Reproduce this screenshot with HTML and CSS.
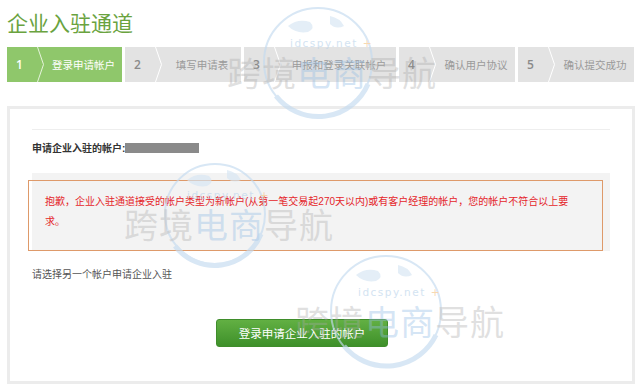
FILE: index.html
```html
<!DOCTYPE html>
<html lang="zh-CN">
<head>
    <meta charset="UTF-8">
    <meta name="viewport" content="width=device-width, initial-scale=1.0">
    <title>企业入驻通道</title>
    <link rel="stylesheet" href="styles.css">
</head>
<body>
    <div class="page">
        <h1 class="title">企业入驻通道</h1>

        <!-- 步驟條 -->
        <div class="steps">
            <div class="step active">
                <span class="step-num">1</span>
                <svg class="step-arrow" width="8" height="35" viewBox="0 0 8 35"><polyline points="0.5,0 6.5,17.5 0.5,35" fill="none" stroke="#e6f3dc" stroke-width="1"/></svg>
                <span class="step-label">登录申请帐户</span>
            </div>
            <div class="step">
                <span class="step-num">2</span>
                <svg class="step-arrow" width="8" height="35" viewBox="0 0 8 35"><polyline points="0.5,0 6.5,17.5 0.5,35" fill="none" stroke="#fff" stroke-width="1"/></svg>
                <span class="step-label">填写申请表</span>
            </div>
            <div class="step wide">
                <span class="step-num">3</span>
                <svg class="step-arrow" width="8" height="35" viewBox="0 0 8 35"><polyline points="0.5,0 6.5,17.5 0.5,35" fill="none" stroke="#fff" stroke-width="1"/></svg>
                <span class="step-label">申报和登录关联帐户</span>
            </div>
            <div class="step">
                <span class="step-num">4</span>
                <svg class="step-arrow" width="8" height="35" viewBox="0 0 8 35"><polyline points="0.5,0 6.5,17.5 0.5,35" fill="none" stroke="#fff" stroke-width="1"/></svg>
                <span class="step-label">确认用户协议</span>
            </div>
            <div class="step">
                <span class="step-num">5</span>
                <svg class="step-arrow" width="8" height="35" viewBox="0 0 8 35"><polyline points="0.5,0 6.5,17.5 0.5,35" fill="none" stroke="#fff" stroke-width="1"/></svg>
                <span class="step-label">确认提交成功</span>
            </div>
        </div>

        <!-- 內容卡片 -->
        <div class="card">
            <div class="card-line"></div>
            <p class="account">申请企业入驻的帐户:<span class="masked"></span></p>
            <div class="alert-wrap">
                <div class="alert">抱歉，企业入驻通道接受的帐户类型为新帐户(从第一笔交易起270天以内)或有客户经理的帐户，您的帐户不符合以上要求。</div>
            </div>
            <p class="hint">请选择另一个帐户申请企业入驻</p>
            <button class="btn">登录申请企业入驻的帐户</button>
        </div>
    </div>

    <!-- 水印 -->
    <div class="wm wm-1">
        <svg class="wm-globe" width="220" height="120" viewBox="0 0 220 120">
            <circle cx="100" cy="60" r="54" fill="none" stroke="#c4dbf0" stroke-width="2"/>
            <path d="M58 94 A54 54 0 0 0 150 82" fill="none" stroke="#c4dbf0" stroke-width="5"/>
            <path d="M70 24 q10 -8 22 -4 q6 6 -2 10 q-12 2 -20 -6z M112 14 q10 2 14 10 q-8 4 -14 -2z" fill="#d6e6f4"/>
        </svg>
        <span class="wm-site">idcspy.net <b>+</b></span>
        <span class="wm-text">跨境<em>电商</em>导航</span>
    </div>
    <div class="wm wm-2">
        <svg class="wm-globe" width="220" height="120" viewBox="0 0 220 120">
            <circle cx="100" cy="60" r="50" fill="none" stroke="#c4dbf0" stroke-width="2"/>
            <path d="M60 92 A50 50 0 0 0 146 80" fill="none" stroke="#c4dbf0" stroke-width="5"/>
            <path d="M72 26 q10 -8 22 -4 q6 6 -2 10 q-12 2 -20 -6z M112 16 q10 2 14 10 q-8 4 -14 -2z" fill="#d6e6f4"/>
        </svg>
        <span class="wm-site">idcspy.net <b>+</b></span>
        <span class="wm-text">跨境<em>电商</em>导航</span>
    </div>
    <div class="wm wm-3">
        <svg class="wm-globe" width="220" height="120" viewBox="0 0 220 120">
            <circle cx="100" cy="60" r="55" fill="none" stroke="#c4dbf0" stroke-width="2"/>
            <path d="M58 95 A55 55 0 0 0 150 84" fill="none" stroke="#c4dbf0" stroke-width="5"/>
            <path d="M70 24 q10 -8 22 -4 q6 6 -2 10 q-12 2 -20 -6z M112 14 q10 2 14 10 q-8 4 -14 -2z" fill="#d6e6f4"/>
        </svg>
        <span class="wm-site">idcspy.net <b>+</b></span>
        <span class="wm-text">跨境<em>电商</em>导航</span>
    </div>
</body>
</html>
```

FILE: styles.css
```css
body {
    margin: 0;
    position: relative;
    font-family: "Liberation Sans", "Noto Sans CJK SC", sans-serif;
    color: #333;
    background: #fff;
}

.page {
    padding: 9px 7px 0 7px;
}

.title {
    margin: 0;
    font-size: 21px;
    line-height: 30px;
    font-weight: normal;
    color: #6aa33f;
}

/* 步驟條 */
.steps {
    display: flex;
    gap: 3px;
    margin-top: 8px;
    height: 35px;
}

.step {
    display: flex;
    align-items: center;
    width: 116px;
    background-color: #e3e3e3;
    color: #9a9a9a;
}

.step.wide {
    width: 152px;
}

.step.active {
    width: 115px;
    background-color: #8fc76b;
    color: #fff;
}

.step-num {
    width: 21px;
    padding-left: 9px;
    font-family: "Open Sans", sans-serif;
    font-size: 12px;
    font-weight: 600;
    color: #8a8a8a;
}

.step.active .step-num {
    color: #fff;
}

.step-arrow {
    flex: none;
}

.step-label {
    flex: 1;
    text-align: center;
    font-size: 10.5px;
}

/* 內容卡片 */
.card {
    margin-top: 24px;
    border: 3px solid #ececec;
    padding: 20px 22px 34px 22px;
}

.card-line {
    height: 1px;
    background-color: #eeeeee;
}

.account {
    margin: 9px 0 0 0;
    font-size: 10px;
    line-height: 20px;
    font-weight: bold;
    color: #333;
}

.masked {
    display: inline-block;
    width: 74px;
    height: 10px;
    vertical-align: -1px;
    background-color: #8a8a8a;
}

.alert-wrap {
    margin-top: 14px;
    padding-top: 7px;
    background-color: #f3f3f3;
}

.alert {
    margin: 0 7px 0 -4px;
    padding: 11px 18px 18px 16px;
    border: 1px solid #de9a6a;
    font-size: 10px;
    line-height: 20px;
    color: #e5252a;
}

.hint {
    margin: 14px 0 0 0;
    font-size: 10px;
    line-height: 20px;
    color: #555;
}

.btn {
    display: block;
    margin: 34px 0 0 184px;
    width: 172px;
    height: 28px;
    border: 1px solid #3f8d2b;
    border-radius: 3px;
    background: linear-gradient(#62b043, #3e902a);
    color: #fff;
    font-family: "Liberation Sans", "Noto Sans CJK SC", sans-serif;
    font-size: 11.5px;
    cursor: pointer;
}

/* 水印 */
.wm {
    position: absolute;
    width: 220px;
    height: 120px;
    pointer-events: none;
    opacity: 0.65;
}

.wm-1 { left: 218px; top: 2px; }
.wm-2 { left: 115px; top: 154px; }
.wm-3 { left: 286px; top: 251px; }

.wm-globe {
    position: absolute;
    left: 0;
    top: 0;
}

.wm-site {
    position: absolute;
    left: 72px;
    top: 35px;
    font-family: "DejaVu Sans", sans-serif;
    font-size: 10.5px;
    letter-spacing: 1.5px;
    color: #bcd5ec;
}

.wm-site b {
    color: #f3c48a;
    font-weight: normal;
}

.wm-text {
    position: absolute;
    left: 9px;
    top: 52px;
    font-family: "Noto Sans CJK SC", sans-serif;
    font-size: 34px;
    line-height: 36px;
    letter-spacing: 1px;
    white-space: nowrap;
    color: rgba(170, 170, 170, 0.55);
}

.wm-text em {
    font-style: normal;
    color: rgba(150, 190, 230, 0.6);
}
```
